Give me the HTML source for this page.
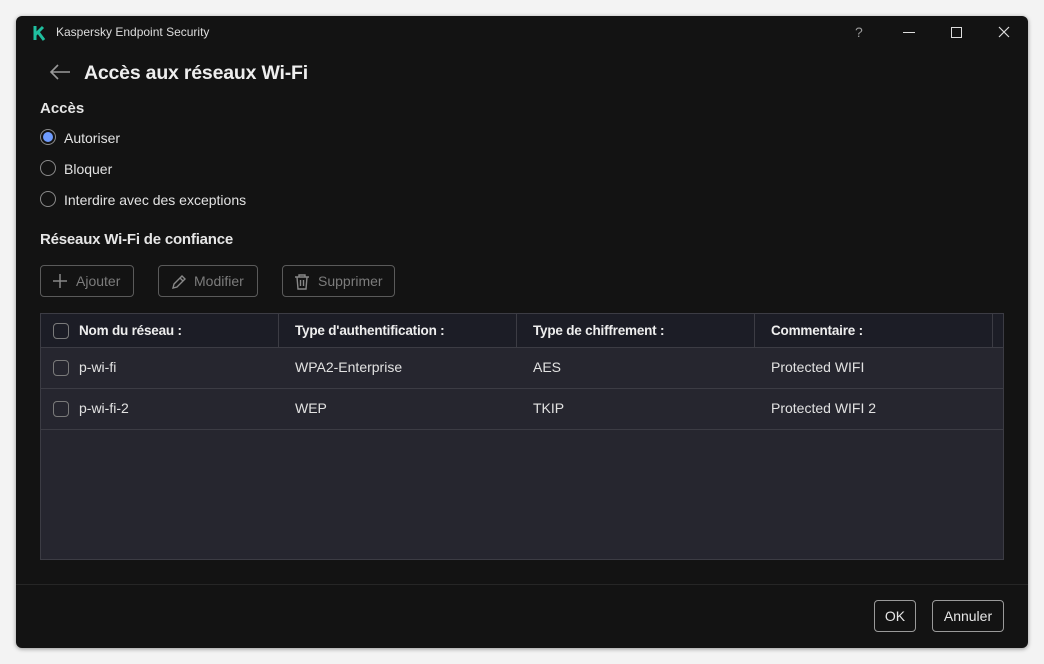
<!DOCTYPE html>
<html><head><style>
*{box-sizing:border-box;margin:0;padding:0}
body{width:1044px;height:664px;background:#f3f3f3;font-family:"Liberation Sans",sans-serif;position:relative;overflow:hidden}
.win{position:absolute;left:16px;top:16px;width:1012px;height:632px;background:#131313;border-radius:6px;box-shadow:0 1px 4px rgba(0,0,0,.4);color:#e6e6e6}
.a{position:absolute;white-space:nowrap}
.radio{position:absolute;width:16px;height:16px;border:1px solid #8a8a8a;border-radius:50%}
.btn{position:absolute;height:32px;border:1px solid #5a5a5a;border-radius:4px;color:#7c7c7c;font-size:14px;line-height:30px}
.tbl{position:absolute;left:24px;top:297px;width:964px;height:247px;background:#26262f;border:1px solid #3c3c44}
.hd{position:absolute;left:0;top:0;width:962px;height:34px;background:#1c1d26;border-bottom:1px solid #3c3c44}
.cb{position:absolute;width:16px;height:16px;border:1px solid #7a7a7a;border-radius:4px}
.t{font-size:14px;color:#e2e2e2}
.h{font-size:13.5px;font-weight:bold;color:#eee;letter-spacing:-0.2px}
.row{position:absolute;left:0;width:962px;border-bottom:1px solid #3c3c44}
.sep{position:absolute;top:0;width:1px;height:34px;background:#3c3c44}
.fbtn{position:absolute;top:584px;height:32px;border:1px solid #9a9a9a;border-radius:4px;font-size:14px;line-height:30px;text-align:center;color:#e6e6e6}
</style></head><body>
<div class="win">
<svg class="a" style="left:17px;top:9px" width="14" height="16" viewBox="0 0 14 16"><path d="M2 1v14M2 10 L10 2 M5 7 L11 15" stroke="#1fbf9f" stroke-width="3" fill="none"/></svg>
<div class="a" style="left:40px;top:9px;font-size:12px;color:#ddd">Kaspersky Endpoint Security</div>
<div class="a" style="left:839px;top:8px;font-size:14px;color:#999">?</div>
<div class="a" style="left:887px;top:16px;width:12px;height:1px;background:#ddd"></div>
<div class="a" style="left:935px;top:11px;width:11px;height:11px;border:1px solid #ddd"></div>
<svg class="a" style="left:982px;top:10px" width="12" height="12"><path d="M1 1L11 11M11 1L1 11" stroke="#ddd" stroke-width="1.2"/></svg>
<svg class="a" style="left:33px;top:48px" width="22" height="16"><path d="M2 8H21M9 1L2 8L9 15" stroke="#999" stroke-width="1.6" fill="none"/></svg>
<div class="a" style="left:68px;top:46px;font-size:19.5px;font-weight:bold;color:#eee;letter-spacing:-0.2px">Accès aux réseaux Wi-Fi</div>
<div class="a" style="left:24px;top:84px;font-size:15px;font-weight:bold">Accès</div>
<div class="radio" style="left:24px;top:113px;border-color:#8a8a8a"><div style="position:absolute;left:2px;top:2px;width:10px;height:10px;border-radius:50%;background:#6f9cff"></div></div>
<div class="a t" style="left:48px;top:114px">Autoriser</div>
<div class="radio" style="left:24px;top:144px"></div>
<div class="a t" style="left:48px;top:145px">Bloquer</div>
<div class="radio" style="left:24px;top:175px"></div>
<div class="a t" style="left:48px;top:176px">Interdire avec des exceptions</div>
<div class="a" style="left:24px;top:215px;font-size:15px;font-weight:bold;letter-spacing:-0.2px">Réseaux Wi-Fi de confiance</div>
<div class="btn" style="left:24px;top:249px;width:94px"><svg class="a" style="left:12px;top:8px" width="14" height="14"><path d="M7 0V14M0 7H14" stroke="#888" stroke-width="1.5"/></svg><span class="a" style="left:35px;top:0">Ajouter</span></div>
<div class="btn" style="left:142px;top:249px;width:100px"><svg class="a" style="left:12px;top:8px" width="16" height="16"><path d="M2 14L3 10L11 2L14 5L6 13Z M9 4L12 7" stroke="#888" stroke-width="1.4" fill="none"/></svg><span class="a" style="left:35px;top:0">Modifier</span></div>
<div class="btn" style="left:266px;top:249px;width:113px"><svg class="a" style="left:11px;top:8px" width="16" height="16"><path d="M1 3H15M5 3V1H11V3M3 3L4 15H12L13 3M6.5 6V12M9.5 6V12" stroke="#888" stroke-width="1.4" fill="none"/></svg><span class="a" style="left:35px;top:0">Supprimer</span></div>
<div class="tbl">
<div class="hd">
<div class="cb" style="left:12px;top:9px"></div>
<div class="a h" style="left:38px;top:9px">Nom du réseau :</div>
<div class="sep" style="left:237px"></div>
<div class="a h" style="left:254px;top:9px">Type d'authentification :</div>
<div class="sep" style="left:475px"></div>
<div class="a h" style="left:492px;top:9px">Type de chiffrement :</div>
<div class="sep" style="left:713px"></div>
<div class="a h" style="left:730px;top:9px">Commentaire :</div>
<div class="sep" style="left:951px"></div>
</div>
<div class="row" style="top:34px;height:41px">
<div class="cb" style="left:12px;top:12px"></div>
<div class="a t" style="left:38px;top:11px">p-wi-fi</div>
<div class="a t" style="left:254px;top:11px">WPA2-Enterprise</div>
<div class="a t" style="left:492px;top:11px">AES</div>
<div class="a t" style="left:730px;top:11px">Protected WIFI</div>
</div>
<div class="row" style="top:75px;height:41px">
<div class="cb" style="left:12px;top:12px"></div>
<div class="a t" style="left:38px;top:11px">p-wi-fi-2</div>
<div class="a t" style="left:254px;top:11px">WEP</div>
<div class="a t" style="left:492px;top:11px">TKIP</div>
<div class="a t" style="left:730px;top:11px">Protected WIFI 2</div>
</div>
</div>
<div class="a" style="left:0;top:568px;width:1012px;height:1px;background:#262626"></div>
<div class="fbtn" style="left:858px;width:42px">OK</div>
<div class="fbtn" style="left:916px;width:72px">Annuler</div>
</div>
</body></html>
